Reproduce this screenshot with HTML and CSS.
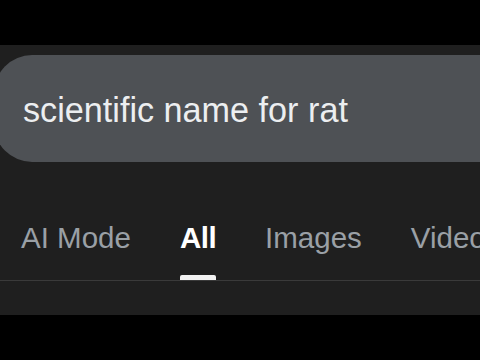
FILE: index.html
```html
<!DOCTYPE html>
<html>
<head>
<meta charset="utf-8">
<link rel="stylesheet" href="styles.css">
</head>
<body>
<div class="bar"></div>
<main class="page">
  <div class="search"><span class="query">scientific name for rat</span></div>
  <nav class="tabs">
    <span class="tab">AI Mode</span>
    <span class="tab active">All</span>
    <span class="tab">Images</span>
    <span class="tab">Videos</span>
  </nav>
</main>
<div class="bar"></div>
</body>
</html>
```
FILE: styles.css
```css
html, body {
  margin: 0;
  padding: 0;
  background: #000;
  width: 480px;
  height: 360px;
  overflow: hidden;
}
.bar {
  height: 45px;
  background: #000;
}
.page {
  height: 270px;
  background: #1f1f1f;
  overflow: hidden;
  padding-top: 10px;
  box-sizing: border-box;
}
.search {
  margin-left: -6px;
  width: 560px;
  height: 107px;
  background: #4e5155;
  border-radius: 38px 0 0 38px;
  display: flex;
  align-items: center;
  padding-left: 29px;
  padding-top: 4px;
  box-sizing: border-box;
}
.query {
  font-family: "Liberation Sans", Arial, sans-serif;
  font-size: 34.2px;
  color: #eceef0;
  white-space: nowrap;
}
.tabs {
  display: flex;
  gap: 49px;
  padding-left: 21px;
  padding-top: 56px;
  border-bottom: 1px solid #3a3a3a;
  white-space: nowrap;
  font-family: "Liberation Sans", Arial, sans-serif;
  font-size: 29.5px;
  color: #9aa0a6;
}
.tab {
  position: relative;
  line-height: 40px;
  padding-bottom: 22px;
}
.tab.active {
  color: #fff;
  font-weight: bold;
  letter-spacing: -0.5px;
}
.tab.active::after {
  content: "";
  position: absolute;
  left: 0;
  right: 0;
  bottom: 0;
  height: 5px;
  background: #f2f2f2;
  border-radius: 2px 2px 0 0;
}
```
